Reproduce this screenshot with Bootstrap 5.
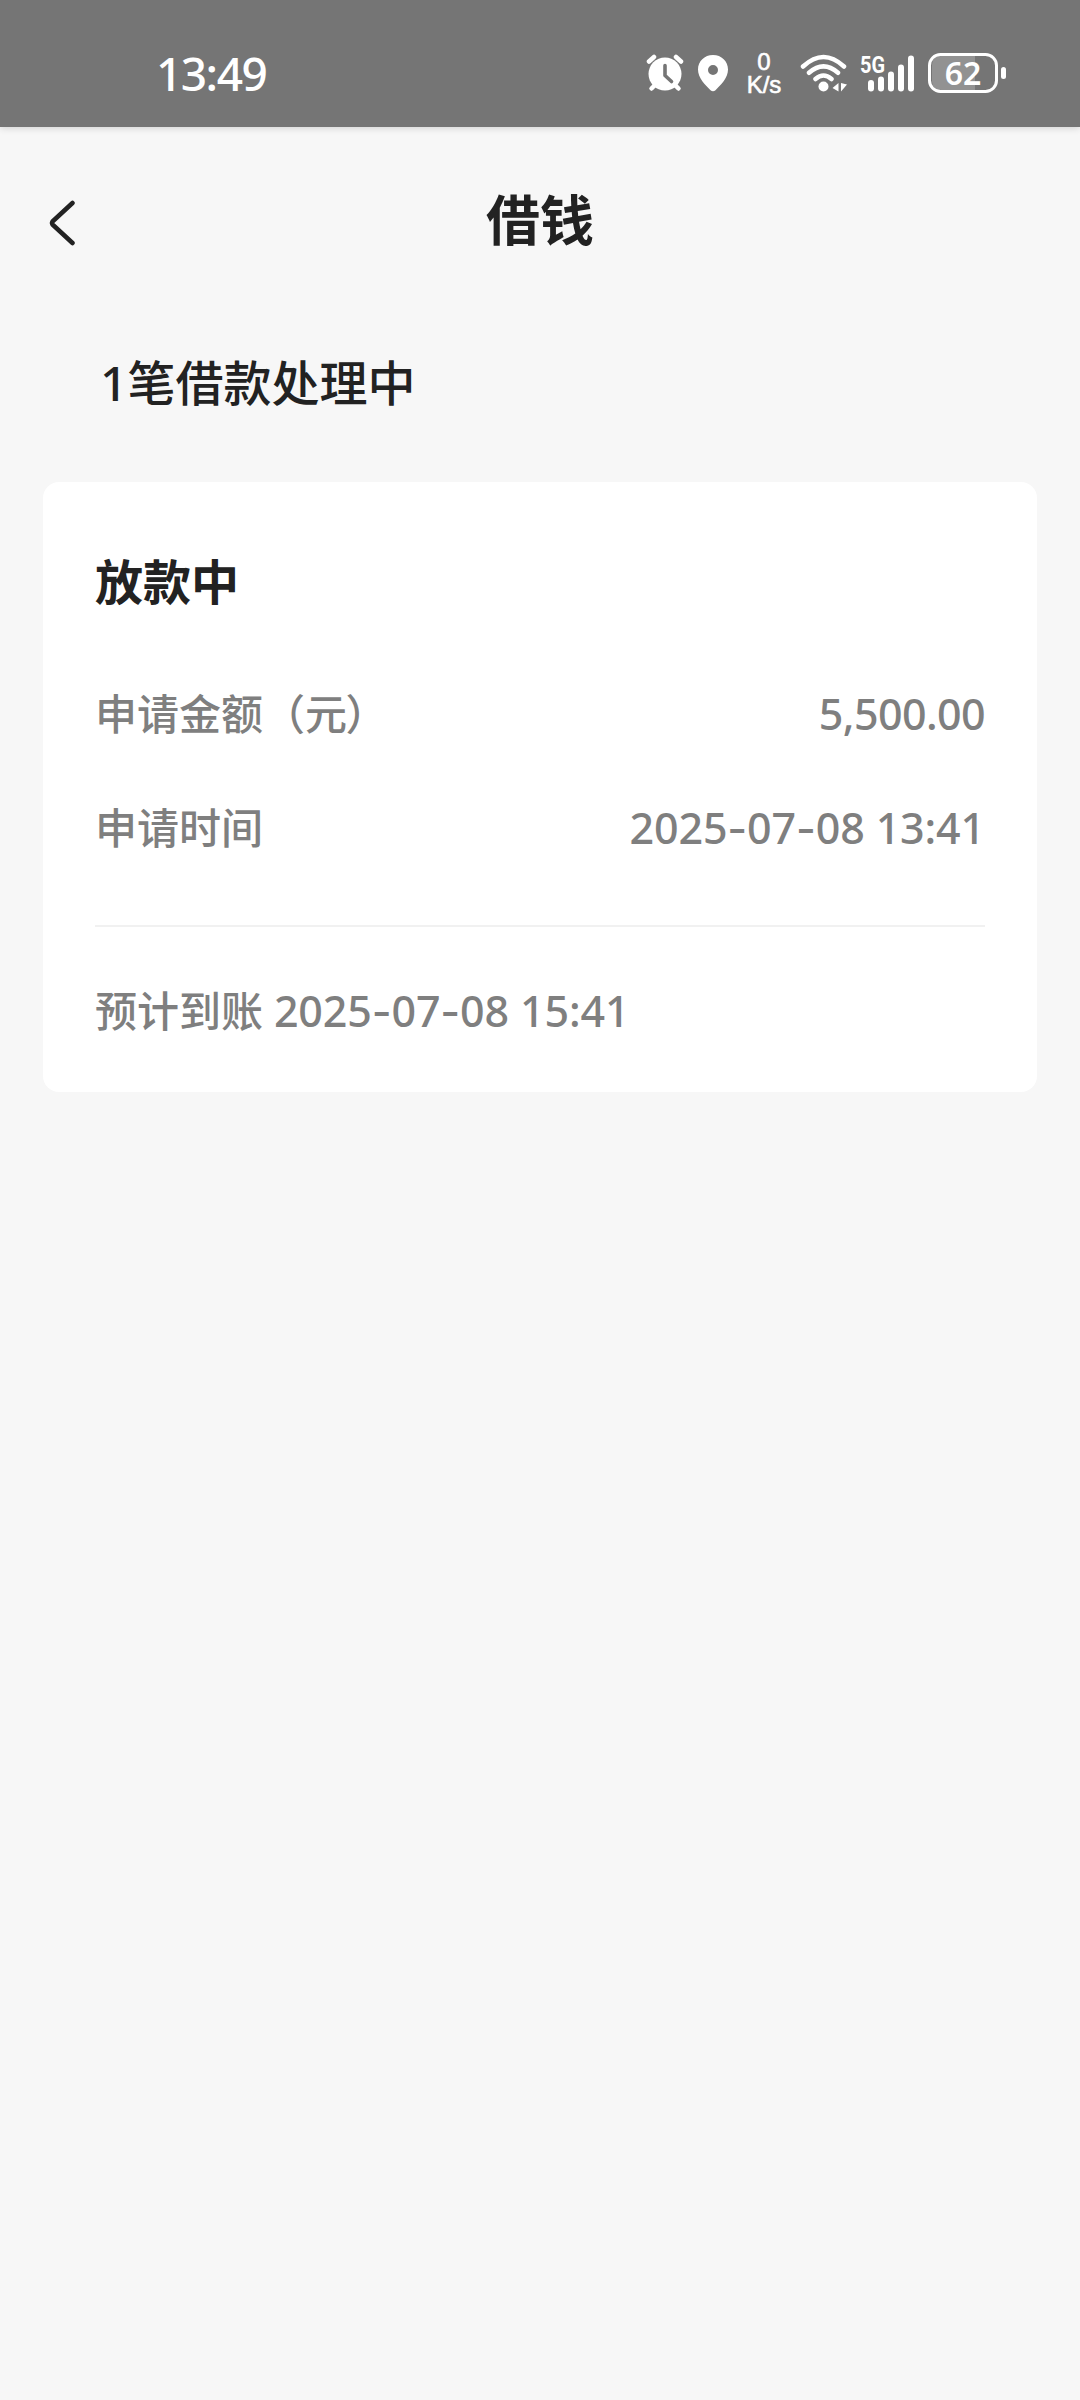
<!DOCTYPE html>
<html lang="zh-CN">
<head>
<meta charset="utf-8">
<meta name="viewport" content="width=device-width, initial-scale=1">
<title>借钱</title>
<link href="https://cdn.jsdelivr.net/npm/bootstrap@5.3.0/dist/css/bootstrap.min.css" rel="stylesheet">
<style>
  body { background: #f7f7f7; color: #222; min-height: 2400px; font-family: "Noto Sans", "Noto Sans CJK SC", sans-serif; font-weight: 500; }
  .status-bar { height: 127px; background: #757575; color: #fff; padding: 19px 73px 0 156px; box-shadow: 0 1px 7px rgba(0,0,0,.16); }
  .status-bar svg { display: block; flex: none; }
  .clock { font-size: 46px; line-height: 54px; letter-spacing: -1.5px; padding-bottom: 1px; }
  .net-speed { width: 38px; font: 400 24px/23px "Liberation Sans", sans-serif; margin: 0 17px 0 17px; -webkit-text-stroke: .6px #fff; }
  .pin { margin-left: 14px; }
  .signal, .battery { margin-left: 12px; }
  .g5 { font: 700 23px "Roboto", sans-serif; }
  .pct { font: 600 32px "Noto Sans", sans-serif; }
  .title-bar { height: 186px; padding: 0 48px; }
  .title-bar .back { margin-top: 73px; width: 30px; height: 46px; }
  .page-title { font: 700 54px/80px "Noto Sans CJK SC", sans-serif; margin-top: 51px; }
  .summary { font-size: 48px; line-height: 70px; margin: 35px 0 0 100px; }
  .loan-card { margin: 64px 43px 0; border-radius: 16px; height: 610px; padding: 62px 52px 0; }
  .state { font: 700 48px/70px "Noto Sans CJK SC", sans-serif; margin-bottom: 70px; }
  .line { font-size: 42px; line-height: 60px; color: #7f7f7f; }
  .line + .line { margin-top: 54px; }
  .figures { font-size: 43px; letter-spacing: -.15px; }
  .sum { letter-spacing: -.6px; }
  .dash { font-family: Inter, sans-serif; }
  .unit { letter-spacing: -1.5px; }
  .rule { height: 2px; background: #f1f1f1; margin: 67px 0 54px; }
</style>
</head>
<body>
<header class="status-bar d-flex align-items-center justify-content-between">
  <span class="clock">13:49</span>
  <div class="d-flex align-items-center">
    <svg width="38" height="38" viewBox="0 0 38 38" fill="none" stroke="#fff" stroke-linecap="round">
      <path d="M3 7.5 8 3M35 7.5 30 3" stroke-width="4.500"/>
      <path d="M10 30 5.500 34.500M28 30 32.500 34.500" stroke-width="4.500"/>
      <circle cx="19" cy="20" r="16.500" fill="#fff" stroke="none"/>
      <path d="M19 11.500V21.500L25.500 27.500" stroke="#757575" stroke-width="3.600" stroke-linejoin="round"/>
    </svg>
    <svg class="pin" width="30" height="38" viewBox="0 0 30 38" fill="#fff" fill-rule="evenodd">
      <path d="M15 1C6.500 1 0 7.200 0 15.500 0 24 7 30.500 12.500 36.200Q15 38.500 17.500 36.200C23 30.500 30 24 30 15.500 30 7.200 23.500 1 15 1ZM15 11a5 5 0 1 1 0 10 5 5 0 0 1 0-10Z"/>
    </svg>
    <div class="net-speed text-center"><div>0</div><div>K/s</div></div>
    <svg width="48" height="38" viewBox="0 0 48 38" fill="none" stroke="#fff" stroke-width="4.500" stroke-linecap="round">
      <path d="M3 12.500Q23.500-6.500 44 12.500M9 18.800Q23.500 6 38 18.800M15.500 25Q23.500 18 31.500 25"/>
      <circle cx="23.500" cy="32.500" r="5" fill="#fff" stroke="none"/>
      <path d="M38.500 29v8.500l-6-3.500zM41 37.500v-8.500l6 1.500z" fill="#fff" stroke="none"/>
    </svg>
    <svg class="signal" width="56" height="42" viewBox="0 0 56 42" fill="#fff">
      <text class="g5" x="0" y="20.500" textLength="25" lengthAdjust="spacingAndGlyphs">5G</text>
      <rect x="8" y="28" width="6" height="11.500" rx="3"/><rect x="18" y="24.500" width="6" height="15" rx="3"/><rect x="28" y="19.500" width="6" height="20" rx="3"/><rect x="38" y="12.500" width="6" height="27" rx="3"/><rect x="48" y="3.500" width="6" height="36" rx="3"/>
    </svg>
    <svg class="battery" width="79" height="42" viewBox="0 0 79 42">
      <path d="M13 4H47V38H13Q4 38 4 29V13Q4 4 13 4Z" fill="#929292"/>
      <rect x="1.500" y="2.500" width="67" height="37" rx="11" fill="none" stroke="#fff" stroke-width="3"/>
      <rect x="73" y="15" width="5" height="12" rx="2.500" fill="#fff"/>
      <text class="pct" x="35" y="32.500" fill="#fff" text-anchor="middle">62</text>
    </svg>
  </div>
</header>

<nav class="title-bar d-flex justify-content-between align-items-start">
  <svg class="back" viewBox="0 0 30 46" fill="none" stroke="#222" stroke-width="4.500" stroke-linecap="round" stroke-linejoin="round"><path d="M24.500 3 4.500 21.500Q3.500 23 4.500 24.500L24.500 43"/></svg>
  <h1 class="page-title mb-0">借钱</h1>
  <span class="back"></span>
</nav>

<main>
  <p class="summary mb-0">1笔借款处理中</p>
  <section class="card loan-card border-0 bg-white">
    <h2 class="state">放款中</h2>
    <div class="line d-flex justify-content-between align-items-center"><span>申请金额（<span class="unit">元</span>）</span><span class="figures sum">5,500.00</span></div>
    <div class="line d-flex justify-content-between align-items-center"><span>申请时间</span><span class="figures">2025<span class="dash">-</span>07<span class="dash">-</span>08 13:41</span></div>
    <div class="rule"></div>
    <div class="line">预计到账 <span class="figures">2025<span class="dash">-</span>07<span class="dash">-</span>08 15:41</span></div>
  </section>
</main>
<script src="https://cdn.jsdelivr.net/npm/bootstrap@5.3.0/dist/js/bootstrap.bundle.min.js"></script>
</body>
</html>
